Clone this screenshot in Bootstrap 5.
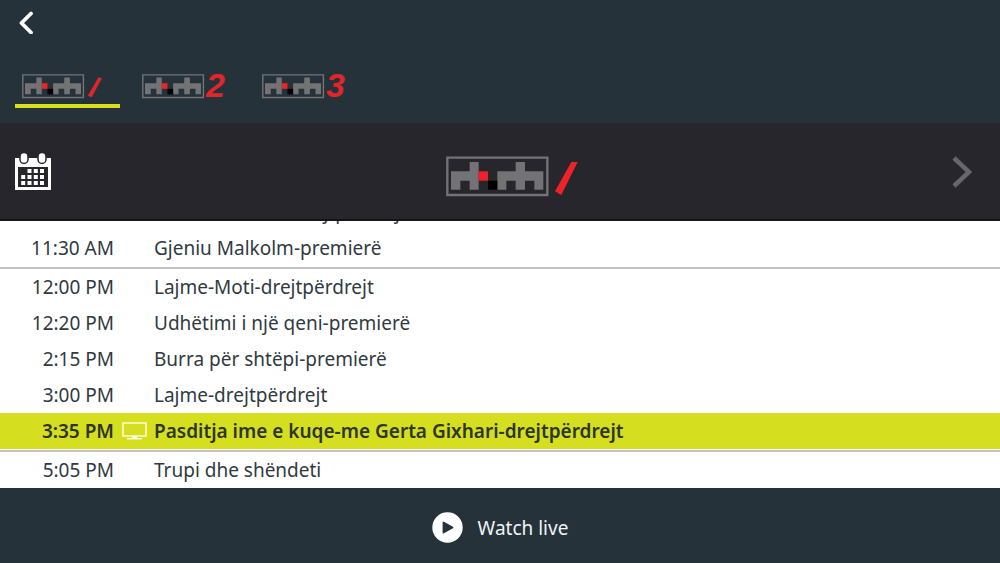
<!DOCTYPE html>
<html lang="sq">
<head>
<meta charset="utf-8">
<meta name="viewport" content="width=device-width, initial-scale=1">
<title>TV schedule</title>
<link rel="stylesheet" href="https://cdn.jsdelivr.net/npm/bootstrap@5.3.0/dist/css/bootstrap.min.css">
<style>
body { font-family: "Noto Sans", "Open Sans", sans-serif; font-size: 19px; line-height: 28px; background: #26323a; color: #303a42; }
.app { height: 100vh; }
.icon-btn { background: none; border: 0; padding: 0; line-height: 0; }
.top-area { padding: 10px 15px 15px; }
.back-btn { padding-left: 4px; }
.channel-tabs { gap: 15px; margin-top: 34px; }
.channel-tab { width: 105px; height: 40px; padding: 6px 7px 0; border-bottom: 4px solid transparent; line-height: 0; }
.channel-tab.active { border-color: #d9e021; }
.logo-small { width: 80px; height: 24px; overflow: visible; }
.logo-large { width: 132px; height: 40px; margin-left: 20px; overflow: visible; }
.logo-digit { font: italic bold 168px "Liberation Sans", sans-serif; fill: #e0262b; }
.day-bar { background: #27262c; height: 98px; padding: 2px 28px 0 15px; border-bottom: 2px solid #16151a; }
.schedule { min-height: 0; background: #fff; }
.slots { border-collapse: separate; border-spacing: 0; }
.slots td { height: 36px; padding: 0; vertical-align: middle; white-space: nowrap; }
.slots .time { width: 114px; text-align: right; }
.slots .status { width: 40px; padding-left: 8px; line-height: 0; }
.slots .group-end td { border-bottom: 1px solid #fff; height: 37px; }
.slots .group-start td { border-top: 2px solid #c2c2c2; height: 38px; }
.slots .on-air td { background: #d5df20; color: #2c362c; font-weight: 600; }
.live-bar { height: 75px; padding-top: 4px; }
.live-btn { gap: 15px; color: #f1f3f4; border: 0; background: none; }
</style>
<script src="https://cdn.jsdelivr.net/npm/bootstrap@5.3.0/dist/js/bootstrap.bundle.min.js"></script>
</head>
<body>
<svg class="d-none" aria-hidden="true">
  <symbol id="rtsh" viewBox="33 33 396 118" overflow="visible">
    <path d="M37 37H337V149H37Z" fill="none" stroke="#737376" stroke-width="7"/>
    <path d="M48 78H104V50H131V133H104V106H76V133H48ZM187 78H242V50H270V78H325V133H298V106H270V133H242V106H214V133H187Z" fill="#737376"/>
    <path d="M131 78H159V106H131Z" fill="#ee2329"/>
    <path d="M159 106H187V133H159Z" fill="#000"/>
  </symbol>
</svg>
<div class="app d-flex flex-column">
  <header class="top-area">
    <button class="icon-btn back-btn d-block" type="button" aria-label="Back">
      <svg width="16" height="24" viewBox="0 0 16 24" fill="none" stroke="#fff" stroke-width="3.8" stroke-linecap="round" stroke-linejoin="round"><path d="M12 3.500L2.500 13L12 22.500"/></svg>
    </button>
    <nav class="channel-tabs d-flex" aria-label="Channels">
      <a class="channel-tab active" href="#" aria-current="page" aria-label="RTSH 1"><svg class="logo-small" viewBox="33 33 396 118"><use href="#rtsh" x="33" y="33" width="396" height="118"/><path d="M411 50L429 53L378 148L359 140Z" fill="#e0262b"/></svg></a>
      <a class="channel-tab" href="#"><svg class="logo-small" viewBox="33 33 396 118"><use href="#rtsh" x="33" y="33" width="396" height="118"/><text class="logo-digit" x="350" y="147">2</text></svg></a>
      <a class="channel-tab" href="#"><svg class="logo-small" viewBox="33 33 396 118"><use href="#rtsh" x="33" y="33" width="396" height="118"/><text class="logo-digit" x="350" y="147">3</text></svg></a>
    </nav>
  </header>
  <section class="day-bar d-flex align-items-center justify-content-between flex-shrink-0">
    <button class="icon-btn" type="button" aria-label="Choose date">
      <svg width="36" height="38" viewBox="0 0 36 38"><path d="M0 5H36V37H0Z" fill="#fff"/><path d="M3 14H33V34H3Z" fill="#27262c"/><rect x="5" y="-.5" width="8" height="11" rx="4" fill="#fff" stroke="#27262c" stroke-width="1.500"/><rect x="23" y="-.5" width="8" height="11" rx="4" fill="#fff" stroke="#27262c" stroke-width="1.500"/><path d="M12.500 16h4v4h-4zM18.800 16h4v4h-4zM25 16h4v4h-4zM6.200 22h4v4h-4zM12.500 22h4v4h-4zM18.800 22h4v4h-4zM25 22h4v4h-4zM6.200 28h4v4h-4zM12.500 28h4v4h-4zM18.800 28h4v4h-4zM25 28h4v4h-4z" fill="#fff"/></svg>
    </button>
    <svg class="logo-large mt-2" role="img" aria-label="RTSH 1" viewBox="33 33 396 118"><use href="#rtsh" x="33" y="33" width="396" height="118"/><path d="M409 50L428 50L379 149L360 138Z" fill="#ee2329"/></svg>
    <button class="icon-btn" type="button" aria-label="Next channel">
      <svg width="20" height="32" viewBox="0 0 20 32" fill="none" stroke="#67676b" stroke-width="4.500"><path d="M2 2L17 16L2 30"/></svg>
    </button>
  </section>
  <main class="schedule flex-grow-1 overflow-hidden d-flex flex-column justify-content-end">
    <table class="slots w-100">
      <tbody>
        <tr><td class="time">11:00 AM</td><td class="status"></td><td>Emisioni i ditës-drejtpërdrejt</td></tr>
        <tr class="group-end"><td class="time">11:30 AM</td><td class="status"></td><td>Gjeniu Malkolm-premierë</td></tr>
        <tr class="group-start"><td class="time">12:00 PM</td><td class="status"></td><td>Lajme-Moti-drejtpërdrejt</td></tr>
        <tr><td class="time">12:20 PM</td><td class="status"></td><td>Udhëtimi i një qeni-premierë</td></tr>
        <tr><td class="time">2:15 PM</td><td class="status"></td><td>Burra për shtëpi-premierë</td></tr>
        <tr><td class="time">3:00 PM</td><td class="status"></td><td>Lajme-drejtpërdrejt</td></tr>
        <tr class="on-air group-end"><td class="time">3:35 PM</td><td class="status"><svg width="25" height="18" viewBox="0 0 25 18" role="img" aria-label="On air"><path d="M1 1H24V14H1Z" fill="none" stroke="#fafbd8" stroke-width="1.600"/><path d="M10 14h5v2h5v1.500H5V16h5z" fill="#fafbd8"/></svg></td><td>Pasditja ime e kuqe-me Gerta Gixhari-drejtpërdrejt</td></tr>
        <tr class="group-start"><td class="time">5:05 PM</td><td class="status"></td><td>Trupi dhe shëndeti</td></tr>
      </tbody>
    </table>
  </main>
  <footer class="live-bar d-flex justify-content-center align-items-center flex-shrink-0">
    <button class="live-btn d-flex align-items-center p-0" type="button">
      <svg width="31" height="31" viewBox="0 0 31 31"><circle cx="15.500" cy="15.500" r="15.200" fill="#fff"/><path d="M11.500 10.500L20.500 15.500L11.500 20.500Z" fill="#26323a" stroke="#26323a" stroke-width="1.800" stroke-linejoin="round"/></svg>
      <span>Watch live</span>
    </button>
  </footer>
</div>
</body>
</html>
